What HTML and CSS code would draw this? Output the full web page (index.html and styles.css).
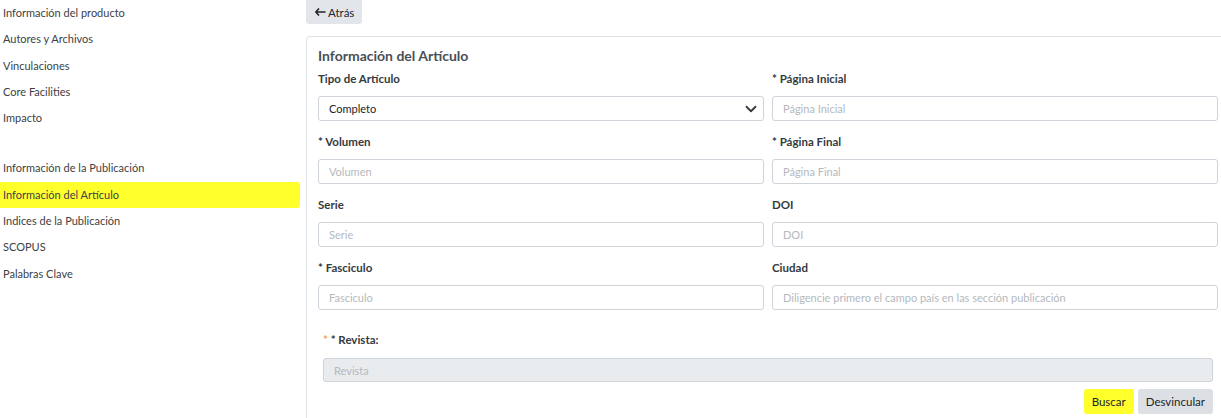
FILE: index.html
```html
<!DOCTYPE html>
<html lang="es">
<head>
    <meta charset="UTF-8">
    <meta name="viewport" content="width=device-width, initial-scale=1.0">
    <title>Información del Artículo</title>
    <link rel="stylesheet" href="styles.css">
</head>
<body>
    <div class="layout">
        <nav class="sidebar">
            <ul class="menu">
                <li>Información del producto</li>
                <li>Autores y Archivos</li>
                <li>Vinculaciones</li>
                <li>Core Facilities</li>
                <li>Impacto</li>
            </ul>
            <ul class="menu menu-second">
                <li>Información de la Publicación</li>
                <li class="active">Información del Artículo</li>
                <li>Indices de la Publicación</li>
                <li>SCOPUS</li>
                <li>Palabras Clave</li>
            </ul>
        </nav>

        <main class="main">
            <button class="btn-back">
                <svg width="11" height="8" viewBox="0 0 11 8"><path d="M4 0.5L0.8 4L4 7.5M1 4H10.5" fill="none" stroke="#212529" stroke-width="1.6"/></svg>
                Atrás
            </button>

            <section class="card">
                <h2 class="card-title">Información del Artículo</h2>

                <div class="form-grid">
                    <div class="field">
                        <label>Tipo de Artículo</label>
                        <div class="select">
                            <span>Completo</span>
                            <svg width="12" height="12" viewBox="0 0 16 16"><path d="M2 5l6 6 6-6" fill="none" stroke="#343a40" stroke-width="2.4" stroke-linecap="round" stroke-linejoin="round"/></svg>
                        </div>
                    </div>
                    <div class="field">
                        <label>* Página Inicial</label>
                        <input type="text" placeholder="Página Inicial">
                    </div>
                    <div class="field">
                        <label>* Volumen</label>
                        <input type="text" placeholder="Volumen">
                    </div>
                    <div class="field">
                        <label>* Página Final</label>
                        <input type="text" placeholder="Página Final">
                    </div>
                    <div class="field">
                        <label>Serie</label>
                        <input type="text" placeholder="Serie">
                    </div>
                    <div class="field">
                        <label>DOI</label>
                        <input type="text" placeholder="DOI">
                    </div>
                    <div class="field">
                        <label>* Fasciculo</label>
                        <input type="text" placeholder="Fasciculo">
                    </div>
                    <div class="field">
                        <label>Ciudad</label>
                        <input type="text" placeholder="Diligencie primero el campo país en las sección publicación">
                    </div>
                </div>

                <div class="revista">
                    <label><span class="star">*</span> * Revista:</label>
                    <input type="text" placeholder="Revista" disabled>
                    <div class="actions">
                        <button class="btn btn-yellow">Buscar</button>
                        <button class="btn btn-gray">Desvincular</button>
                    </div>
                </div>
            </section>
        </main>
    </div>
</body>
</html>
```

FILE: styles.css
```css
html, body {
    margin: 0;
    padding: 0;
    overflow: hidden;
}
body {
    font-family: Lato, "Open Sans", sans-serif;
    font-size: 11.5px;
    color: #212529;
    background: #fff;
}
.layout {
    display: flex;
    width: 1230px;
}
.sidebar {
    width: 300px;
    flex: none;
}
.menu {
    list-style: none;
    margin: 0;
    padding: 0;
}
.menu li {
    height: 26.3px;
    line-height: 26.3px;
    padding-left: 3px;
    font-size: 11px;
    color: #3d4145;
    border-radius: 0 3px 3px 0;
}
.menu-second { margin-top: 24px; }
.menu li.active { background: #ffff2c; }

.main {
    flex: 1;
    padding-left: 6px;
}
.btn-back {
    display: flex;
    align-items: center;
    gap: 2px;
    height: 24px;
    padding: 0 8px 0 9px;
    border: none;
    border-radius: 0 0 3px 3px;
    background: #e2e5e9;
    color: #212529;
    font: inherit;
}
.card {
    margin-top: 12px;
    border: 1px solid #dee2e6;
    border-radius: 4px;
    padding: 9px 11px 20px;
    height: 420px;
}
.card-title {
    margin: 0;
    font-size: 14px;
    font-weight: 700;
    line-height: 20px;
    color: #495057;
}
.form-grid {
    display: grid;
    grid-template-columns: 1fr 1fr;
    column-gap: 8px;
    row-gap: 12px;
    margin-top: 4px;
}
.field label {
    display: block;
    line-height: 18px;
    margin-bottom: 8px;
    font-weight: 700;
    color: #343a40;
}
input, .select {
    box-sizing: border-box;
    width: 100%;
    height: 25px;
    border: 1px solid #ced4da;
    border-radius: 3px;
    padding: 0 10px;
    font: inherit;
    font-size: 11px;
    color: #212529;
    background: #fff;
    outline: none;
}
input::placeholder { color: #b4b9be; }
.select {
    display: flex;
    align-items: center;
    justify-content: space-between;
    padding-right: 6px;
}
.revista {
    padding: 0 5px;
    margin-top: 21px;
}
.revista label {
    display: block;
    line-height: 18px;
    margin-bottom: 9px;
    font-weight: 700;
    color: #343a40;
}
.revista .star { color: #f5a15a; }
.revista input {
    background: #e9ecef;
    height: 24px;
}
.actions {
    display: flex;
    justify-content: flex-end;
    gap: 4px;
    margin-top: 7px;
}
.btn {
    height: 25px;
    padding: 0 8px;
    border: none;
    border-radius: 3px;
    font: inherit;
    color: #212529;
}
.btn-yellow { background: #ffff2c; }
.btn-gray { background: #dcdfe3; }
```
